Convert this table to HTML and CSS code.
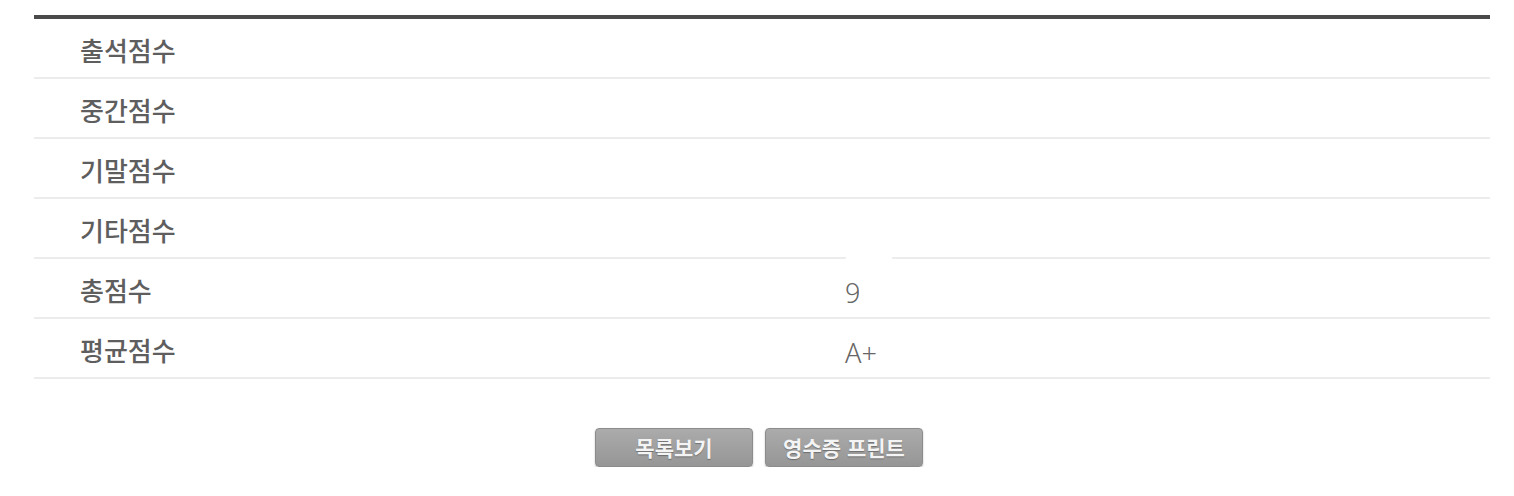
FILE: index.html
```html
<!DOCTYPE html>
<html lang="ko">
<head>
<meta charset="utf-8">
<link rel="stylesheet" href="styles.css">
</head>
<body>
<div class="page">
  <div class="score-table">
    <div class="row"><div class="label">출석점수</div><div class="value"></div></div>
    <div class="row"><div class="label">중간점수</div><div class="value"></div></div>
    <div class="row"><div class="label">기말점수</div><div class="value"></div></div>
    <div class="row"><div class="label">기타점수</div><div class="value"></div></div>
    <div class="row"><div class="label">총점수</div><div class="value"><span class="val-text">95</span><span class="mask mask-line"></span><span class="mask mask-body"></span></div></div>
    <div class="row"><div class="label">평균점수</div><div class="value"><span class="val-text">A+</span></div></div>
  </div>
  <div class="buttons">
    <button class="btn">목록보기</button>
    <button class="btn">영수증 프린트</button>
  </div>
</div>
</body>
</html>
```
FILE: styles.css
```css
html, body {
  margin: 0;
  padding: 0;
  background: #fff;
}
.page {
  padding: 15px 24px 0 34px;
  font-family: "Noto Sans CJK KR", "Noto Sans", sans-serif;
}
.score-table {
  border-top: 4px solid #4a4a4a;
}
.row {
  display: grid;
  grid-template-columns: 811px 1fr;
  height: 58px;
  border-bottom: 2px solid #ececec;
  align-items: center;
}
.label {
  padding-left: 46px;
  padding-top: 3px;
  font-size: 26px;
  font-weight: 500;
  color: #5e5e5e;
  line-height: 1;
}
.value {
  position: relative;
  height: 100%;
  display: flex;
  align-items: center;
}
.val-text {
  font-family: "Noto Sans", "Noto Sans CJK KR", sans-serif;
  font-weight: 300;
  font-size: 27px;
  color: #666;
  line-height: 1;
  padding-top: 8px;
}
.mask {
  position: absolute;
  background: #fff;
}
.mask-line {
  left: 0;
  width: 48px;
  top: -4px;
  height: 6px;
  border-radius: 8px 8px 0 0;
}
.mask-body {
  left: 14px;
  width: 34px;
  top: 0;
  height: 44px;
}
.buttons {
  display: flex;
  justify-content: center;
  gap: 12px;
  margin-top: 49px;
  padding-right: 6px;
}
.btn {
  width: 158px;
  height: 39px;
  border: 1px solid #8c8c8c;
  border-radius: 4px;
  background: linear-gradient(#ababab, #969696);
  box-shadow: 0 1px 2px rgba(0,0,0,0.25);
  color: #f4f4f4;
  font-family: "Noto Sans CJK KR", sans-serif;
  font-size: 21px;
  font-weight: 700;
  line-height: 1;
  text-shadow: 0 1px 1px rgba(0,0,0,0.3);
  padding: 0;
}
```
